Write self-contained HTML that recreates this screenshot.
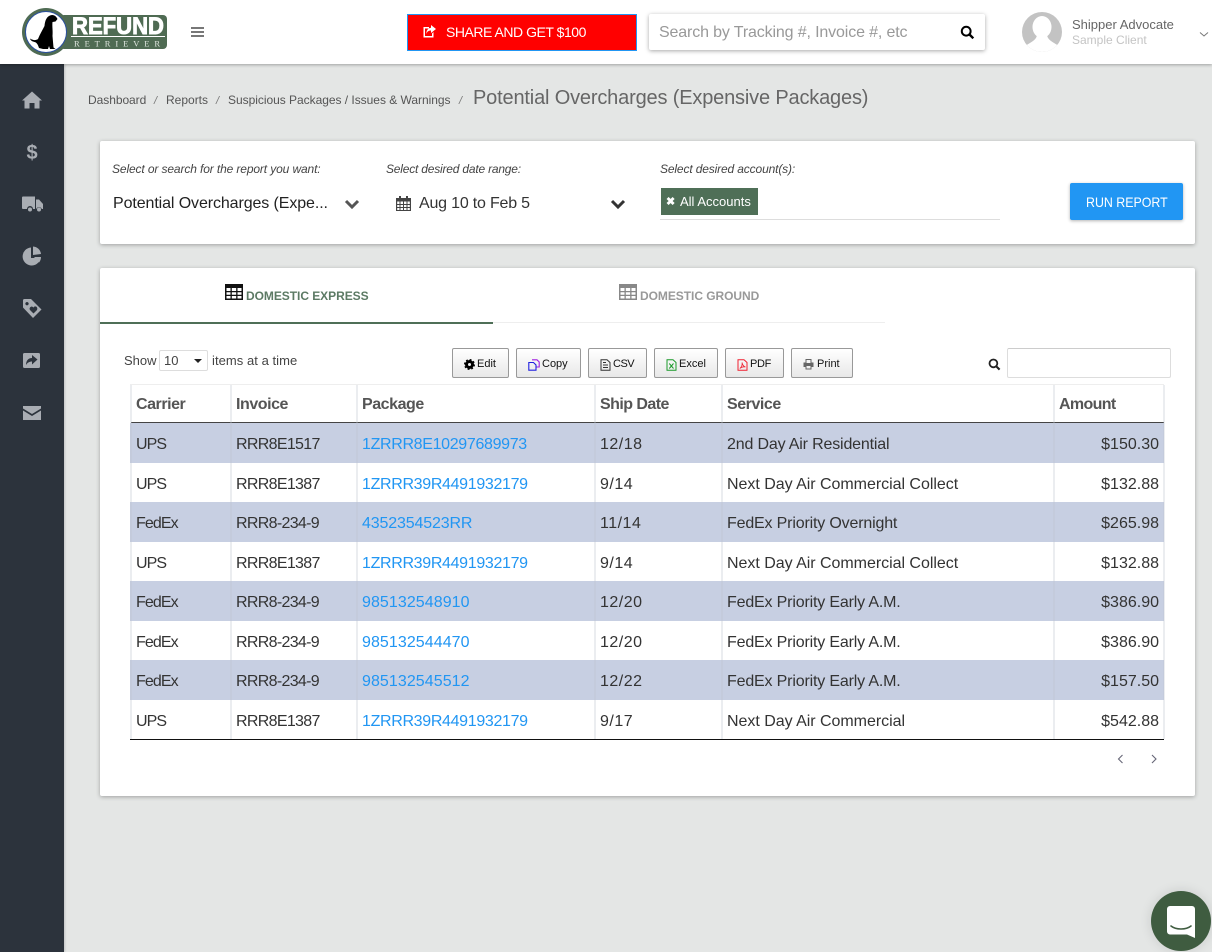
<!DOCTYPE html>
<html><head><meta charset="utf-8"><style>
html,body{margin:0;padding:0;width:1212px;height:952px;overflow:hidden;background:#e4e6e5;font-family:"Liberation Sans",sans-serif;color:#333}
.t{position:absolute;white-space:nowrap;line-height:20px}
.a{position:absolute}
.card{position:absolute;background:#fff;border-radius:2px;box-shadow:0 1px 4px rgba(0,0,0,.3)}
.btn{position:absolute;top:348px;height:30px;box-sizing:border-box;border:1px solid #999;border-radius:2px;background:linear-gradient(#fff,#e8e8e8);font-size:11px;color:#111;line-height:30px;white-space:nowrap}
.btn svg{position:absolute;top:10px}
.btn span{position:absolute;top:0}
.row{position:absolute;left:130px;width:1034px}
.c{position:absolute;font-size:16px;line-height:20px;white-space:nowrap;color:#333;margin-top:2px}
.lnk{color:#2196f3}
.h{position:absolute;font-size:16px;font-weight:bold;color:#555;top:395px;line-height:20px;letter-spacing:-.45px}
.vl{position:absolute;width:2px;top:385px;height:354px}
.ca{left:136px;letter-spacing:-.9px}
.in{left:236px;letter-spacing:-.68px}
.pk{left:362px}
.z{letter-spacing:-.33px}
.n{letter-spacing:.07px}
.sd{left:600px;letter-spacing:.5px}
.sv{left:727px;letter-spacing:-.17px}
.nx{left:727px;letter-spacing:-.03px}
.am{right:53px}
</style></head><body>

<!-- header -->
<div class="a" style="left:0;top:0;width:1212px;height:64px;background:#fff;box-shadow:0 1px 3px rgba(0,0,0,.3);z-index:3"></div>
<div class="a" style="left:0;top:64px;width:64px;height:888px;background:#2c333c;box-shadow:1px 0 2px rgba(0,0,0,.15);z-index:2"></div>

<div class="a" style="left:0;top:0;width:1212px;height:64px;z-index:4">
<svg class="a" style="left:22px;top:6px" width="148" height="52" viewBox="0 0 148 52">
<rect x="38" y="9" width="107" height="34" rx="4" fill="#4f6b53"/>
<circle cx="24" cy="26" r="24" fill="#4f6b53"/>
<circle cx="24" cy="26" r="20.5" fill="#fff" stroke="#2a4fa0" stroke-width="1"/>
<path d="M8 32.5C11 34.5 14 34.5 16 33C18 28 20.5 24 22.5 20C23 14 25 9.5 30 9C33 9 34.5 11 35.5 13L33.5 15.5L30.5 16C30 20 31 25 30.5 30L31.5 41.5L33.5 43H28L27 40L26 43H21L17 42C16 39 15 36.5 12.5 36C10.5 35.5 8.5 34.5 8 32.5Z" fill="#000"/>
<text x="50" y="28" font-family="Liberation Sans" font-weight="bold" font-size="24" fill="#fff" stroke="#fff" stroke-width=".9" textLength="92" lengthAdjust="spacingAndGlyphs">REFUND</text>
<rect x="49" y="30" width="94" height="1" fill="#fff"/>
<text x="52" y="40.5" font-family="Liberation Serif" font-size="8.5" fill="#dfe6df" textLength="86" lengthAdjust="spacing">RETRIEVER</text>
</svg>
<div class="a" style="left:191px;top:27px;width:13px;height:2px;background:#777"></div>
<div class="a" style="left:191px;top:31px;width:13px;height:2px;background:#777"></div>
<div class="a" style="left:191px;top:35px;width:13px;height:2px;background:#777"></div>

<div class="a" style="left:407px;top:14px;width:230px;height:37px;box-sizing:border-box;background:#f00;border:1px solid #2196f3"></div>
<svg class="a" style="left:422px;top:25px" width="14" height="13" viewBox="0 0 14 13"><path d="M2.5 2H7V3.5H3V11H10V8.5L11.5 7V12.5H1.5V2Z" fill="#fff"/><path d="M9 0L14 4L9 8V5.5C6.5 5.5 5 6.5 4.5 9C4 5.5 6 3 9 2.7Z" fill="#fff"/></svg>
<div class="t" id="share" style="left:446px;top:22px;font-size:14px;color:#fff;letter-spacing:-.47px">SHARE AND GET $100</div>

<div class="a" style="left:649px;top:14px;width:336px;height:36px;background:#fff;border-radius:2px;box-shadow:0 1px 4px rgba(0,0,0,.35)"></div>
<div class="t" style="left:659px;top:23px;font-size:16px;color:#999;letter-spacing:-.14px">Search by Tracking #, Invoice #, etc</div>
<svg class="a" style="left:960px;top:25px" width="15" height="15" viewBox="0 0 15 15"><circle cx="6.2" cy="6.2" r="4.4" fill="none" stroke="#000" stroke-width="2"/><path d="M9.5 9.5L13.3 13.3" stroke="#000" stroke-width="2.4"/></svg>

<svg class="a" style="left:1022px;top:12px" width="40" height="40" viewBox="0 0 40 40"><defs><clipPath id="av"><circle cx="20" cy="20" r="20"/></clipPath></defs><circle cx="20" cy="20" r="20" fill="#c3c3c3"/><g clip-path="url(#av)"><ellipse cx="20" cy="15" rx="9.5" ry="11" fill="#fff"/><path d="M15 23C14.5 28 9 30 4 33.5L6 42H34L36 33.5C31 30 25.5 28 25 23Z" fill="#fff"/></g></svg>
<div class="t" style="left:1072px;top:15px;font-size:13px;color:#666">Shipper Advocate</div>
<div class="t" style="left:1072px;top:30px;font-size:12px;color:#c4c4c4">Sample Client</div>
<svg class="a" style="left:1199px;top:31px" width="10" height="7" viewBox="0 0 10 7"><path d="M1 1.5L5 5L9 1.5" fill="none" stroke="#777" stroke-width="1"/></svg>
</div>

<!-- sidebar icons -->
<svg class="a" style="left:0;top:64px;z-index:5" width="64" height="370" viewBox="0 64 64 370" fill="#a9adb3">
<path d="M32 91.5L42 100.5H39.5V108.5H34.5V103H29.5V108.5H24.5V100.5H22Z"/>
<text x="32" y="159" text-anchor="middle" font-family="Liberation Sans" font-weight="bold" font-size="20">$</text>
<path d="M22 197.5a1 1 0 0 1 1-1H35V209H33a3 3 0 0 0-6 0H23a1 1 0 0 1-1-1Z"/><path d="M36 199.5H39L43 204V209H41.8a3 3 0 0 0-5.6 0H36Z"/><circle cx="30" cy="209.5" r="2"/><circle cx="39" cy="209.5" r="2"/>
<path d="M31 247.5A9 9 0 1 0 40.5 258H31Z"/><path d="M33 246.5A8.5 8.5 0 0 1 41 254L33 255Z"/><path d="M34 257H41A8.5 8.5 0 0 1 39 262.5Z"/>
<path fill-rule="evenodd" d="M23 300.5A1.5 1.5 0 0 1 24.5 299H31L41.5 309.5 33 318 23 307.5ZM27 302a1.7 1.7 0 1 0 .01 0ZM32 306.5C30 306.5 29 308.5 30 310L33.5 313.5 37 310C38 308 36.5 306 34.5 306.5L33.5 307.5Z"/>
<path fill-rule="evenodd" d="M24.5 353H38.5A1.5 1.5 0 0 1 40 354.5V366.5A1.5 1.5 0 0 1 38.5 368H24.5A1.5 1.5 0 0 1 23 366.5V354.5A1.5 1.5 0 0 1 24.5 353ZM32 355V358C28 358 26 361 26 365C27.5 362.5 29.5 361.5 32 361.5V364.5L37.5 359.5Z"/>
<path d="M23 406H41V408.5L32 414L23 408.5Z"/><path d="M23 410.5L32 416L41 410.5V420H23Z"/>
</svg>

<!-- breadcrumb -->
<div class="t" style="left:88px;top:90px;font-size:12px;color:#555;letter-spacing:-.05px">Dashboard</div>
<div class="t" style="left:154px;top:91px;font-size:11px;color:#777;font-style:italic">/</div>
<div class="t" style="left:166px;top:90px;font-size:12px;color:#555">Reports</div>
<div class="t" style="left:216px;top:91px;font-size:11px;color:#777;font-style:italic">/</div>
<div class="t" style="left:228px;top:90px;font-size:12px;color:#555;letter-spacing:-.03px">Suspicious Packages / Issues &amp; Warnings</div>
<div class="t" style="left:459px;top:91px;font-size:11px;color:#777;font-style:italic">/</div>
<div class="t" style="left:473px;top:88px;font-size:20px;color:#666;letter-spacing:-.17px">Potential Overcharges (Expensive Packages)</div>

<!-- filter card -->
<div class="card" style="left:100px;top:141px;width:1095px;height:103px"></div>
<div class="t" style="left:112px;top:159px;font-size:12px;font-style:italic;color:#444;letter-spacing:-.12px">Select or search for the report you want:</div>
<div class="t" style="left:386px;top:159px;font-size:12px;font-style:italic;color:#444;letter-spacing:-.2px">Select desired date range:</div>
<div class="t" style="left:660px;top:159px;font-size:12px;font-style:italic;color:#444;letter-spacing:-.14px">Select desired account(s):</div>
<div class="t" style="left:113px;top:194px;font-size:16px;color:#222;letter-spacing:-.1px">Potential Overcharges (Expe...</div>
<svg class="a" style="left:344px;top:199px" width="16" height="11" viewBox="0 0 16 11"><path d="M2 2L8 8L14 2" fill="none" stroke="#555" stroke-width="3"/></svg>
<svg class="a" style="left:396px;top:196px" width="15" height="15" viewBox="0 0 15 15"><path fill-rule="evenodd" d="M3 0H5V2H10V0H12V2H15V15H0V2H3ZM1.2 5.5V8H3.5V5.5ZM4.5 5.5V8H7V5.5ZM8 5.5V8H10.5V5.5ZM11.5 5.5V8H13.8V5.5ZM1.2 9V11H3.5V9ZM4.5 9V11H7V9ZM8 9V11H10.5V9ZM11.5 9V11H13.8V9ZM1.2 12V14H3.5V12ZM4.5 12V14H7V12ZM8 12V14H10.5V12ZM11.5 12V14H13.8V12Z" fill="#444"/></svg>
<div class="t" style="left:419px;top:194px;font-size:16px;color:#333;letter-spacing:-.2px">Aug 10 to Feb 5</div>
<svg class="a" style="left:610px;top:199px" width="16" height="11" viewBox="0 0 16 11"><path d="M2 2L8 8L14 2" fill="none" stroke="#333" stroke-width="3"/></svg>
<div class="a" style="left:661px;top:188px;width:97px;height:27px;background:#4f6f57"></div>
<div class="t" style="left:666px;top:192px;font-size:11px;font-weight:bold;color:#fff">✖</div>
<div class="t" style="left:680px;top:192px;font-size:13px;color:#fff">All Accounts</div>
<div class="a" style="left:660px;top:219px;width:340px;height:1px;background:#ddd"></div>
<div class="a" style="left:1070px;top:183px;width:113px;height:37px;background:#2196f3;border-radius:2px;box-shadow:0 1px 3px rgba(0,0,0,.3)"></div>
<div class="t" style="left:1086px;top:192px;font-size:14px;color:#fff;transform:scaleX(.885);transform-origin:left center">RUN REPORT</div>

<!-- main card -->
<div class="card" style="left:100px;top:268px;width:1095px;height:528px"></div>
<div class="a" style="left:100px;top:322px;width:785px;height:1px;background:#eee"></div>
<div class="a" style="left:100px;top:322px;width:393px;height:2px;background:#4f6f57"></div>
<svg class="a" style="left:225px;top:284px" width="18" height="16" viewBox="0 0 18 16"><path fill-rule="evenodd" d="M0 0H18V16H0ZM1.5 4V7H5.5V4ZM6.8 4V7H11.2V4ZM12.5 4V7H16.5V4ZM1.5 8.3V10.7H5.5V8.3ZM6.8 8.3V10.7H11.2V8.3ZM12.5 8.3V10.7H16.5V8.3ZM1.5 12V14.5H5.5V12ZM6.8 12V14.5H11.2V12ZM12.5 12V14.5H16.5V12Z" fill="#111"/></svg>
<div class="t" style="left:246px;top:286px;font-size:12px;font-weight:bold;color:#5c7a64;letter-spacing:-.05px">DOMESTIC EXPRESS</div>
<svg class="a" style="left:619px;top:284px" width="18" height="16" viewBox="0 0 18 16"><path fill-rule="evenodd" d="M0 0H18V16H0ZM1.5 4V7H5.5V4ZM6.8 4V7H11.2V4ZM12.5 4V7H16.5V4ZM1.5 8.3V10.7H5.5V8.3ZM6.8 8.3V10.7H11.2V8.3ZM12.5 8.3V10.7H16.5V8.3ZM1.5 12V14.5H5.5V12ZM6.8 12V14.5H11.2V12ZM12.5 12V14.5H16.5V12Z" fill="#888"/></svg>
<div class="t" style="left:640px;top:286px;font-size:12px;font-weight:bold;color:#999;letter-spacing:-.05px">DOMESTIC GROUND</div>

<div class="t" style="left:124px;top:351px;font-size:13px;color:#444">Show</div>
<div class="a" style="left:159px;top:350px;width:49px;height:21px;box-sizing:border-box;border:1px solid #ddd;border-radius:2px;background:#fff"></div>
<div class="t" style="left:164px;top:351px;font-size:13px;color:#444">10</div>
<div class="a" style="left:194px;top:359px;width:0;height:0;border-left:4px solid transparent;border-right:4px solid transparent;border-top:4px solid #222"></div>
<div class="t" style="left:212px;top:351px;font-size:13px;color:#444;letter-spacing:.05px">items at a time</div>

<div class="btn" style="left:452px;width:57px"><svg style="left:11px" width="11" height="11" viewBox="0 0 11 11"><circle cx="5.5" cy="5.5" r="3" fill="none" stroke="#000" stroke-width="3"/><circle cx="5.5" cy="5.5" r="4.6" fill="none" stroke="#000" stroke-width="1.8" stroke-dasharray="1.8 1.81"/></svg><span style="left:24px">Edit</span></div>
<div class="btn" style="left:516px;width:65px"><svg style="left:11px" width="12" height="12" viewBox="0 0 12 12"><path d="M4 .8H9L11.2 3V8H8" fill="none" stroke="#a020e0" stroke-width="1.1"/><path d="M.8 3.5H5.5L8 6V11.2H.8Z" fill="none" stroke="#2020e0" stroke-width="1.1"/></svg><span style="left:25px">Copy</span></div>
<div class="btn" style="left:588px;width:59px"><svg style="left:11px" width="11" height="12" viewBox="0 0 11 12"><path d="M1 .8H7L10 3.5V11.2H1Z M3 6H8 M3 8.5H8 M3 3.5H6" fill="none" stroke="#333" stroke-width="1"/></svg><span style="left:24px;letter-spacing:-.5px">CSV</span></div>
<div class="btn" style="left:654px;width:64px"><svg style="left:11px" width="11" height="12" viewBox="0 0 11 12"><path d="M1 .8H7L10 3.5V11.2H1Z" fill="none" stroke="#1a9a2a" stroke-width="1"/><path d="M3.3 4.5L7.5 9.5M7.5 4.5L3.3 9.5" stroke="#1a9a2a" stroke-width="1"/></svg><span style="left:24px">Excel</span></div>
<div class="btn" style="left:725px;width:59px"><svg style="left:11px" width="11" height="12" viewBox="0 0 11 12"><path d="M1 .8H7L10 3.5V11.2H1Z" fill="none" stroke="#f02030" stroke-width="1"/><path d="M2.8 9.5C5 7.5 5.5 5.5 5 3.5C5.5 6 6.5 7.5 8.5 8C6.5 7.5 4.5 8 2.8 9.5Z" fill="none" stroke="#f02030" stroke-width=".8"/></svg><span style="left:24px;letter-spacing:-.3px">PDF</span></div>
<div class="btn" style="left:791px;width:62px"><svg style="left:11px" width="11" height="11" viewBox="0 0 11 11"><path fill-rule="evenodd" d="M2.5 0H8.5V3.5H10.5V8H8.5V10.5H2.5V8H.5V3.5H2.5ZM3.5 1V4H7.5V1ZM3.5 7V9.5H7.5V7Z" fill="#666"/></svg><span style="left:25px">Print</span></div>

<svg class="a" style="left:988px;top:358px" width="13" height="13" viewBox="0 0 13 13"><circle cx="5.4" cy="5.4" r="3.9" fill="none" stroke="#222" stroke-width="1.8"/><path d="M8.2 8.2L11.6 11.6" stroke="#222" stroke-width="2.1"/></svg>
<div class="a" style="left:1007px;top:348px;width:164px;height:30px;box-sizing:border-box;border:1px solid #ddd;border-top-color:#ccc;border-radius:2px;background:#fff"></div>

<!-- table -->
<div class="a" style="left:130px;top:384px;width:1034px;height:1px;background:#eee"></div>
<div class="a" style="left:131px;top:422px;width:1033px;height:1px;background:#444"></div>

<div class="row" style="top:423px;height:39.5px;background:#c7cfe2"></div>
<div class="row" style="top:502px;height:39.5px;background:#c7cfe2"></div>
<div class="row" style="top:581px;height:39.5px;background:#c7cfe2"></div>
<div class="row" style="top:660px;height:39.5px;background:#c7cfe2"></div>
<div class="a" style="left:130px;top:739px;width:1034px;height:1px;background:#111"></div>

<div class="vl" style="left:130px;background:rgba(190,195,205,.3)"></div>
<div class="vl" style="left:230px;background:rgba(190,195,205,.3)"></div>
<div class="vl" style="left:356px;background:rgba(190,195,205,.3)"></div>
<div class="vl" style="left:594px;background:rgba(190,195,205,.3)"></div>
<div class="vl" style="left:721px;background:rgba(190,195,205,.3)"></div>
<div class="vl" style="left:1053px;background:rgba(190,195,205,.3)"></div>
<div class="vl" style="left:1163px;background:rgba(190,195,205,.3)"></div>

<div class="h" style="left:136px">Carrier</div>
<div class="h" style="left:236px">Invoice</div>
<div class="h" style="left:362px">Package</div>
<div class="h" style="left:600px;letter-spacing:-.55px">Ship Date</div>
<div class="h" style="left:727px">Service</div>
<div class="h" style="left:1059px;letter-spacing:-.65px">Amount</div>

<div class="c ca" style="top:433px">UPS</div><div class="c in" style="top:433px">RRR8E1517</div><div class="c lnk pk z" style="top:433px">1ZRRR8E10297689973</div><div class="c sd" style="top:433px">12/18</div><div class="c sv" style="top:433px">2nd Day Air Residential</div><div class="c am" style="top:433px">$150.30</div>
<div class="c ca" style="top:473px">UPS</div><div class="c in" style="top:473px">RRR8E1387</div><div class="c lnk pk z" style="top:473px">1ZRRR39R4491932179</div><div class="c sd" style="top:473px">9/14</div><div class="c nx" style="top:473px">Next Day Air Commercial Collect</div><div class="c am" style="top:473px">$132.88</div>
<div class="c ca" style="top:512px">FedEx</div><div class="c in" style="top:512px">RRR8-234-9</div><div class="c lnk pk" style="top:512px;letter-spacing:-.15px">4352354523RR</div><div class="c sd" style="top:512px">11/14</div><div class="c sv" style="top:512px">FedEx Priority Overnight</div><div class="c am" style="top:512px">$265.98</div>
<div class="c ca" style="top:552px">UPS</div><div class="c in" style="top:552px">RRR8E1387</div><div class="c lnk pk z" style="top:552px">1ZRRR39R4491932179</div><div class="c sd" style="top:552px">9/14</div><div class="c nx" style="top:552px">Next Day Air Commercial Collect</div><div class="c am" style="top:552px">$132.88</div>
<div class="c ca" style="top:591px">FedEx</div><div class="c in" style="top:591px">RRR8-234-9</div><div class="c lnk pk n" style="top:591px">985132548910</div><div class="c sd" style="top:591px">12/20</div><div class="c sv" style="top:591px">FedEx Priority Early A.M.</div><div class="c am" style="top:591px">$386.90</div>
<div class="c ca" style="top:631px">FedEx</div><div class="c in" style="top:631px">RRR8-234-9</div><div class="c lnk pk n" style="top:631px">985132544470</div><div class="c sd" style="top:631px">12/20</div><div class="c sv" style="top:631px">FedEx Priority Early A.M.</div><div class="c am" style="top:631px">$386.90</div>
<div class="c ca" style="top:670px">FedEx</div><div class="c in" style="top:670px">RRR8-234-9</div><div class="c lnk pk n" style="top:670px">985132545512</div><div class="c sd" style="top:670px">12/22</div><div class="c sv" style="top:670px">FedEx Priority Early A.M.</div><div class="c am" style="top:670px">$157.50</div>
<div class="c ca" style="top:710px">UPS</div><div class="c in" style="top:710px">RRR8E1387</div><div class="c lnk pk z" style="top:710px">1ZRRR39R4491932179</div><div class="c sd" style="top:710px">9/17</div><div class="c nx" style="top:710px">Next Day Air Commercial</div><div class="c am" style="top:710px">$542.88</div>

<svg class="a" style="left:1116px;top:753px" width="42" height="12" viewBox="0 0 42 12"><path d="M6.5 2L2.5 6L6.5 10" fill="none" stroke="#667" stroke-width="1.1"/><path d="M36 2L40 6L36 10" fill="none" stroke="#667" stroke-width="1.1"/></svg>

<!-- chat -->
<div class="a" style="left:1151px;top:891px;width:60px;height:60px;border-radius:50%;background:#3f5c40;box-shadow:0 0 12px rgba(0,0,0,.12)"></div>
<svg class="a" style="left:1167px;top:905px" width="30" height="34" viewBox="0 0 30 34"><path d="M3 1H25A3 3 0 0 1 28 4V33L20 29.5H3A3 3 0 0 1 0 26.5V4A3 3 0 0 1 3 1Z" fill="#fff"/><path d="M4 21C9 25 19 25 24 21" fill="none" stroke="#3f5c40" stroke-width="1.6" stroke-linecap="round"/></svg>

</body></html>
